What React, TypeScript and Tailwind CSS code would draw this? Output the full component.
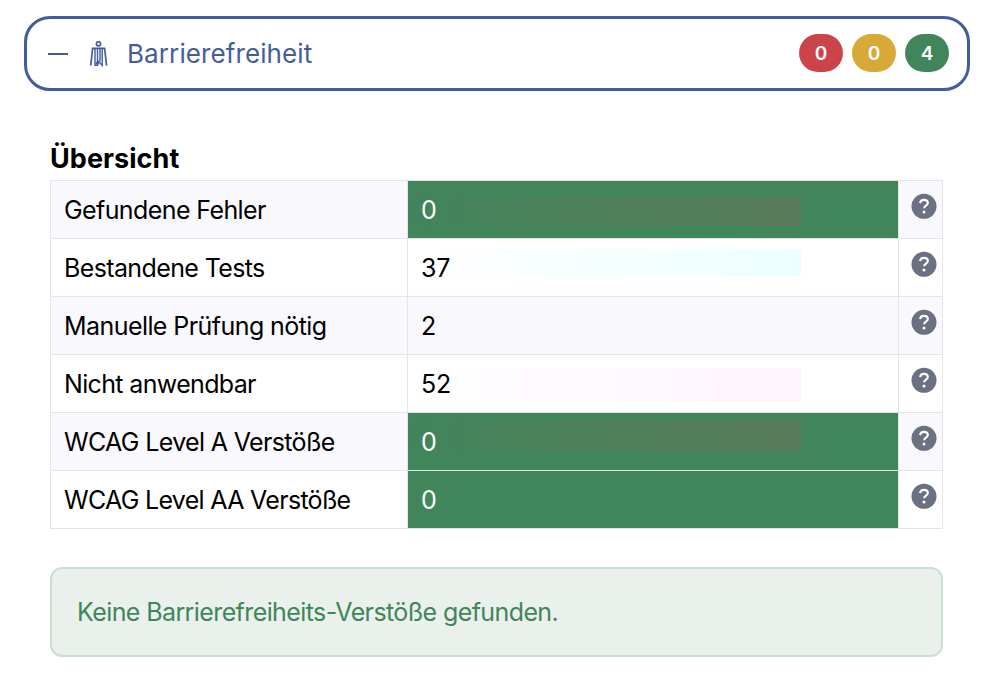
const counters = [
  { label: "errors", value: 0, className: "bg-[#cb444a]" },
  { label: "warnings", value: 0, className: "bg-[#d8a938]" },
  { label: "passed", value: 4, className: "bg-[#41855a]" },
];

const okCell = "bg-[#41855a] text-white";

const rows = [
  {
    label: "Gefundene Fehler",
    value: 0,
    cell: okCell,
    tint: "mt-[15px] h-[30px] from-[#41855a] to-[#587b59]",
    tracking: "tracking-[-0.6px]",
  },
  {
    label: "Bestandene Tests",
    value: 37,
    tint: "mt-[10px] h-[27px] from-white to-[#ecffff]",
    tracking: "tracking-[-0.62px]",
  },
  { label: "Manuelle Prüfung nötig", value: 2, tracking: "tracking-[-0.57px]" },
  {
    label: "Nicht anwendbar",
    value: 52,
    tint: "mt-[13px] h-[33px] from-white to-[#fef4ff]",
    tracking: "tracking-[-0.65px]",
  },
  {
    label: "WCAG Level A Verstöße",
    value: 0,
    cell: okCell,
    tint: "mt-[6px] h-[32px] from-[#41855a] to-[#587b59]",
    tracking: "tracking-[-0.65px]",
  },
  { label: "WCAG Level AA Verstöße", value: 0, cell: okCell, tracking: "tracking-[-0.7px]" },
];

function PersonIcon() {
  return (
    <svg className="ml-[21px] h-[26px] w-[20px]" viewBox="0 0 20 26" fill="none" stroke="currentColor" strokeWidth="1.7">
      <circle cx="9.5" cy="2.8" r="2.1" />
      <path d="M1.7 24.6 3.6 7.3h12l2 17.3" />
      <path d="M6 7.6v16.8h2.6l1.2-3.6 3.4 3.6V7.6M8.5 7.6v13M11 7.6v13" strokeWidth="1.4" />
      <path d="m7 23.4 2.6-3.6" strokeWidth="2.2" />
    </svg>
  );
}

function HelpIcon() {
  return (
    <svg className="mt-3 ml-3 size-[26px]" viewBox="0 0 26 26" fill="none">
      <circle cx="13" cy="13.3" r="12.5" fill="#6b7183" />
      <path d="M9.1 10.2C9.3 8.1 10.8 6.9 13 6.9c2.2 0 3.8 1.1 3.8 3 0 2.8-3.7 2.6-3.7 5.4" stroke="white" strokeWidth="2.1" />
      <circle cx="13" cy="19.1" r="1.5" fill="white" />
    </svg>
  );
}

export default function App() {
  return (
    <main className="h-[698px] overflow-hidden bg-white pt-4 pl-6 font-['Inter',sans-serif] text-black">
      <header className="flex h-[75px] w-[946px] items-center rounded-[26px] border-3 border-[#455c9a] pr-[18px] pl-[21px] text-[#455c9a]">
        <span className="h-[2px] w-5 bg-current" />
        <PersonIcon />
        <h2 className="ml-[18px] text-[26px] leading-none font-[430] tracking-[0.1px]">Barrierefreiheit</h2>
        <div className="ml-auto flex gap-[9px]">
          {counters.map((counter) => (
            <span
              key={counter.label}
              className={`mb-px flex h-[38px] w-[44px] items-center justify-center rounded-full pt-[3px] text-[19px] font-semibold text-white ${counter.className}`}
            >
              {counter.value}
            </span>
          ))}
        </div>
      </header>

      <section className="mt-[51px] ml-[26px] w-[893px]">
        <h3 className="h-[38px] text-[27px] leading-[34px] font-[650] tracking-[0.05px]">Übersicht</h3>
        <div className="border-t border-l border-[#e4e4ea] text-[25px] font-[430]">
          {rows.map((row, index) => (
            <div key={row.label} className={`flex h-[58px] ${index % 2 === 0 ? "bg-[#f9f9fd]" : "bg-white"}`}>
              <div
                className={`flex w-[357px] items-center border-r border-b border-[#e4e4ea] pt-[2px] pl-[13px] whitespace-nowrap ${row.tracking}`}
              >
                {row.label}
              </div>
              <div className={`relative w-[491px] border-r border-b border-[#e4e4ea] ${row.cell ?? ""}`}>
                {row.tint && <div className={`w-[393px] bg-linear-to-r ${row.tint}`} />}
                <span className="absolute inset-y-0 left-[13px] flex items-center pt-[2px] tracking-[-0.3px]">
                  {row.value}
                </span>
              </div>
              <div className="grow border-r border-b border-[#e4e4ea]">
                <HelpIcon />
              </div>
            </div>
          ))}
        </div>

        <div className="mt-[38px] flex h-[90px] items-center rounded-[12px] border-2 border-[#c8dfd3] bg-[#eaf1ed] pt-[2px] pl-[25px] text-[25px] font-[430] tracking-[-0.6px] text-[#41855a]">
          Keine Barrierefreiheits-Verstöße gefunden.
        </div>
      </section>
    </main>
  );
}
